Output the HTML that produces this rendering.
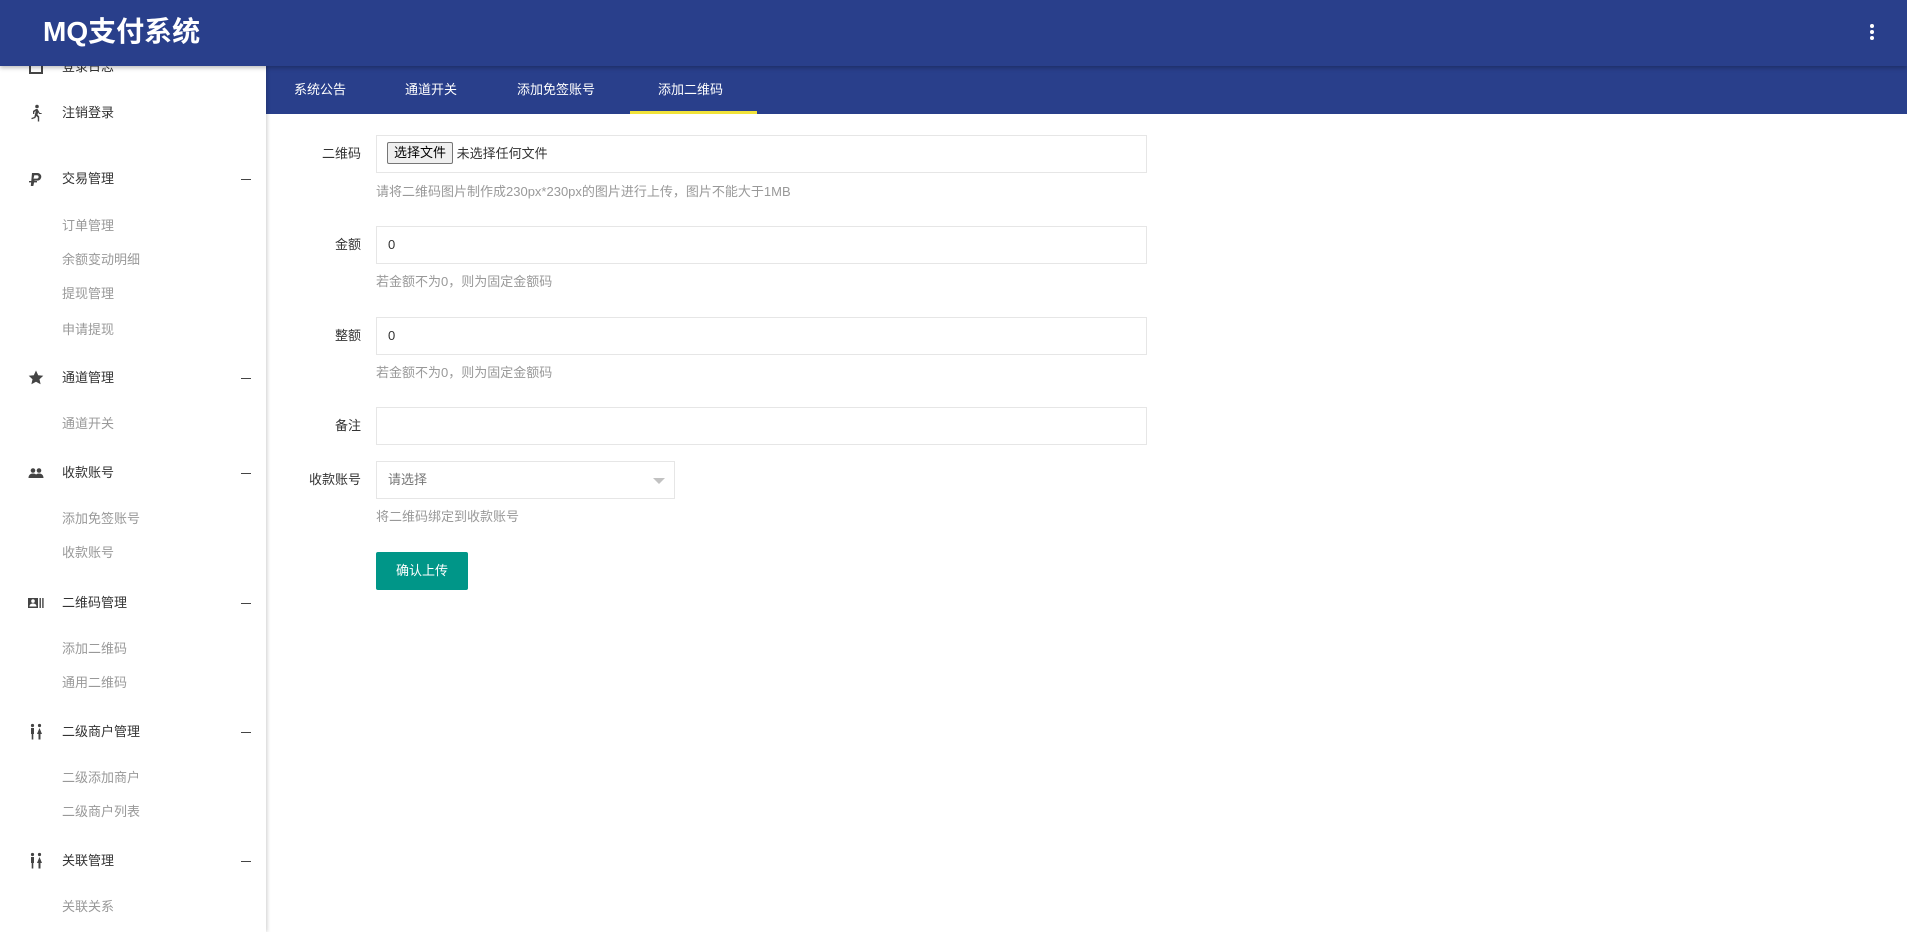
<!DOCTYPE html>
<html><head><meta charset="utf-8"><style>
*{margin:0;padding:0;box-sizing:border-box}
body{width:1907px;height:932px;overflow:hidden;background:#fff;font-family:"Liberation Sans","Noto Sans CJK SC",sans-serif;font-size:13px;color:#333;position:relative}
.hdr{position:absolute;left:0;top:0;width:1907px;height:66px;background:#293f8b;z-index:3;box-shadow:0 2px 4px rgba(0,0,0,.25)}
.hdr .t{position:absolute;left:43px;top:14px;color:#fff;font-size:28px;font-weight:bold;line-height:36px}
.dot{position:absolute;left:1870px;width:4px;height:4px;border-radius:50%;background:#fff}
.side{position:absolute;left:0;top:0;width:266px;height:932px;background:#fff;box-shadow:1px 0 4px rgba(0,0,0,.2);z-index:2}
.it{position:absolute;left:62px;font-size:13px;line-height:16px;color:#333}
.sub{color:#999}
.ic{position:absolute;left:27px;width:18px;height:18px}
.mn{position:absolute;left:241px;width:10px;height:1px;background:#444}
.tabs{position:absolute;left:266px;top:66px;right:0;height:48px;background:#293f8b;z-index:1}
.tab{position:absolute;top:16px;color:#fff;font-size:13px;line-height:16px}
.ul{position:absolute;left:364px;top:45px;width:127px;height:3px;background:#f1e33a}
.lbl{position:absolute;right:1546px;font-size:13px;color:#333;line-height:16px}
.inp{position:absolute;left:376px;width:771px;height:38px;border:1px solid #e6e6e6;background:#fff;padding-left:11px;line-height:36px;font-size:13px;color:#333}
.help{position:absolute;left:376px;font-size:13px;color:#999;line-height:16px}
.fb{display:inline-block;border:1px solid #767676;background:#efefef;border-radius:2px;padding:0 6px;line-height:20px;font-size:13px;color:#000;vertical-align:middle;margin-top:-3px}
.btn{position:absolute;left:376px;top:552px;width:92px;height:38px;background:#009688;color:#fff;font-size:13px;text-align:center;line-height:38px;border-radius:2px}
</style></head><body>
<div class="hdr"><div class="t">MQ支付系统</div>
<div class="dot" style="top:24px"></div><div class="dot" style="top:30px"></div><div class="dot" style="top:36px"></div></div>
<div class="side">
<svg class="ic" style="top:58px" viewBox="0 0 18 18"><rect x="3" y="2" width="12" height="13" fill="none" stroke="#444" stroke-width="2"/><rect x="6" y="6" width="6" height="2" fill="#444"/></svg><div class="it" style="top:59px">登录日志</div>
<svg class="ic" style="top:104px" viewBox="0 0 18 18" fill="#444"><circle cx="10" cy="2.5" r="1.8"/><path d="M9 5l-3 2v3h1.3V8l1.5-1-1.5 6-3 1 .5 1.3 3.5-1.3 1-2 1.5 1.5v4h1.4v-5l-1.7-1.7.6-2.3 1 1.5h2.5V9h-1.8L10.5 5z"/></svg><div class="it" style="top:105px">注销登录</div>
<svg class="ic" style="top:170px" viewBox="0 0 18 18" fill="#444"><path d="M5 3h5.5a3.8 3.8 0 010 7.6H7.5L6.3 16H3.8zM7.3 5.2l-.8 3.4h3.4a1.7 1.7 0 000-3.4z"/><path d="M2 11h8v1.4H2z"/></svg><div class="it" style="top:171px">交易管理</div><div class="mn" style="top:179px"></div>
<div class="it sub" style="top:218px">订单管理</div>
<div class="it sub" style="top:252px">余额变动明细</div>
<div class="it sub" style="top:286px">提现管理</div>
<div class="it sub" style="top:322px">申请提现</div>
<svg class="ic" style="top:369px" viewBox="0 0 18 18" fill="#444"><path d="M9 1.5l2.2 4.8 5.1.5-3.8 3.4 1.1 5.1L9 12.7l-4.6 2.6 1.1-5.1L1.7 6.8l5.1-.5z"/></svg><div class="it" style="top:370px">通道管理</div><div class="mn" style="top:378px"></div>
<div class="it sub" style="top:416px">通道开关</div>
<svg class="ic" style="top:464px" viewBox="0 0 18 18" fill="#444"><circle cx="6" cy="6.5" r="2.3"/><circle cx="12" cy="6.5" r="2.3"/><path d="M1.5 14c0-3 2-4.5 4.5-4.5s4.5 1.5 4.5 4.5zM8 14c0-3 1.5-4.5 4-4.5s4.5 1.5 4.5 4.5z"/></svg><div class="it" style="top:465px">收款账号</div><div class="mn" style="top:473px"></div>
<div class="it sub" style="top:511px">添加免签账号</div>
<div class="it sub" style="top:545px">收款账号</div>
<svg class="ic" style="top:594px" viewBox="0 0 18 18" fill="#444"><path d="M1 4h10v10H1zM2.5 12.5h7c0-2-1.5-3-3.5-3s-3.5 1-3.5 3zM6 5.3a1.8 1.8 0 100 3.6 1.8 1.8 0 000-3.6z" fill-rule="evenodd"/><rect x="12.5" y="4" width="1.4" height="10"/><rect x="15.2" y="4" width="1.4" height="10"/></svg><div class="it" style="top:595px">二维码管理</div><div class="mn" style="top:603px"></div>
<div class="it sub" style="top:641px">添加二维码</div>
<div class="it sub" style="top:675px">通用二维码</div>
<svg class="ic" style="top:723px" viewBox="0 0 18 18" fill="#444"><circle cx="5.5" cy="2.5" r="1.6"/><circle cx="12.5" cy="2.5" r="1.6"/><path d="M4 5h3v6H6.3v5.5H4.7V11H4zM12.5 5l2.5 6h-1.5v5.5h-2V11H10z"/></svg><div class="it" style="top:724px">二级商户管理</div><div class="mn" style="top:732px"></div>
<div class="it sub" style="top:770px">二级添加商户</div>
<div class="it sub" style="top:804px">二级商户列表</div>
<svg class="ic" style="top:852px" viewBox="0 0 18 18" fill="#444"><circle cx="5.5" cy="2.5" r="1.6"/><circle cx="12.5" cy="2.5" r="1.6"/><path d="M4 5h3v6H6.3v5.5H4.7V11H4zM12.5 5l2.5 6h-1.5v5.5h-2V11H10z"/></svg><div class="it" style="top:853px">关联管理</div><div class="mn" style="top:861px"></div>
<div class="it sub" style="top:899px">关联关系</div>
</div>
<div class="tabs">
<div class="tab" style="left:28px">系统公告</div>
<div class="tab" style="left:139px">通道开关</div>
<div class="tab" style="left:251px">添加免签账号</div>
<div class="tab" style="left:392px">添加二维码</div>
<div class="ul"></div>
</div>
<div class="lbl" style="top:146px">二维码</div>
<div class="inp" style="top:135px;padding-left:10px"><span class="fb">选择文件</span> 未选择任何文件</div>
<div class="help" style="top:184px">请将二维码图片制作成230px*230px的图片进行上传，图片不能大于1MB</div>
<div class="lbl" style="top:237px">金额</div>
<div class="inp" style="top:226px">0</div>
<div class="help" style="top:274px">若金额不为0，则为固定金额码</div>
<div class="lbl" style="top:328px">整额</div>
<div class="inp" style="top:317px">0</div>
<div class="help" style="top:365px">若金额不为0，则为固定金额码</div>
<div class="lbl" style="top:418px">备注</div>
<div class="inp" style="top:407px"></div>
<div class="lbl" style="top:472px">收款账号</div>
<div class="inp" style="top:461px;width:299px;color:#777">请选择<span style="position:absolute;right:9px;top:16px;width:0;height:0;border-left:6px solid transparent;border-right:6px solid transparent;border-top:6px solid #c2c2c2"></span></div>
<div class="help" style="top:509px">将二维码绑定到收款账号</div>
<div class="btn">确认上传</div>
</body></html>
